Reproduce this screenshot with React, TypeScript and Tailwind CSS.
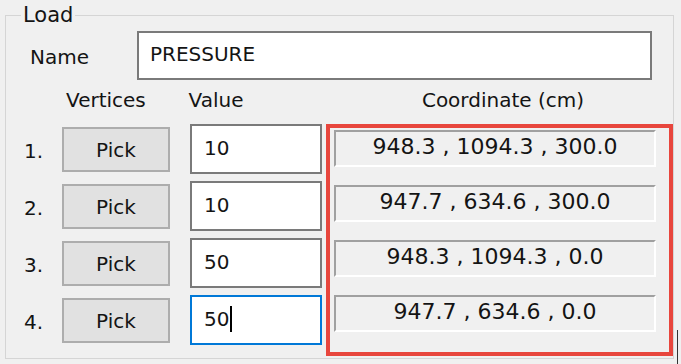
import React from 'react';

const ROWS = [
  { n: '1.', value: '10', coord: '948.3 , 1094.3 , 300.0' },
  { n: '2.', value: '10', coord: '947.7 , 634.6 , 300.0' },
  { n: '3.', value: '50', coord: '948.3 , 1094.3 , 0.0' },
  { n: '4.', value: '50', coord: '947.7 , 634.6 , 0.0', focused: true },
];

const font = "font-['DejaVu_Sans',sans-serif]";

export default function App() {
  return (
    <div className={`relative w-[681px] h-[364px] bg-[#f0f0f0] pt-[15px] pl-[5px] text-[#141414] overflow-hidden ${font}`}>
      {/* group box */}
      <div className="relative w-[669px] h-[344px] border border-[#d5d5d5]">
        <span className="absolute left-[15px] top-[-13px] px-[2px] bg-[#f0f0f0] text-[21px] leading-[24px]">Load</span>

        <div className="pl-[18px] pt-[15px]">
          {/* name */}
          <div className="flex items-center h-[49px]">
            <span className="w-[113px] pl-[6px] text-[20px] leading-none pt-[2px]">Name</span>
            <div className="w-[515px] h-[49px] bg-white border-2 border-[#7a7a7a] pl-[11px] flex items-center text-[20px] pb-[4px]">
              PRESSURE
            </div>
          </div>

          {/* headers */}
          <div className="flex items-center h-[28px] mt-[6px] text-[20px]">
            <span className="w-[166px] pl-[42px]">Vertices</span>
            <span className="w-[142px]">Value</span>
            <span className="w-[348px] text-center pl-[4px]">Coordinate (cm)</span>
          </div>

          <div className="flex mt-[10px]">
            <div className="flex flex-col gap-[7px]">
              {ROWS.map((r) => (
                <div key={r.n} className="flex items-center h-[50px]">
                  <span className="w-[38px] text-[20px] pt-[4px]">{r.n}</span>
                  <div className="w-[108px] h-[45px] bg-[#e1e1e1] border-2 border-[#adadad] flex items-center justify-center text-[20px] pt-[2px]">
                    Pick
                  </div>
                  <div
                    className={`ml-[20px] w-[132px] h-[50px] bg-white border-2 pl-[12px] flex items-center text-[20px] pb-[2px] ${
                      r.focused ? 'border-[#0078d7]' : 'border-[#7a7a7a]'
                    }`}
                  >
                    {r.value}
                    {r.focused && <span className="ml-[1px] w-[2px] h-[26px] bg-black" />}
                  </div>
                </div>
              ))}
            </div>

            {/* highlighted coordinate column */}
            <div className="ml-[4px] w-[347px] h-[232px] border-4 border-[#e8463d] pl-[4px] pt-[2px] flex flex-col gap-[18px]">
              {ROWS.map((r) => (
                <div
                  key={r.n}
                  className="w-[322px] h-[37px] bg-[#f0f0f0] border-2 border-t-[#a0a0a0] border-l-[#a0a0a0] border-r-white border-b-white flex items-center justify-center text-[22px] pb-[4px]"
                >
                  {r.coord}
                </div>
              ))}
            </div>
          </div>
        </div>
      </div>
      <div className="absolute left-[677px] top-[330px] w-px h-[34px] bg-[#333]" />
    </div>
  );
}
